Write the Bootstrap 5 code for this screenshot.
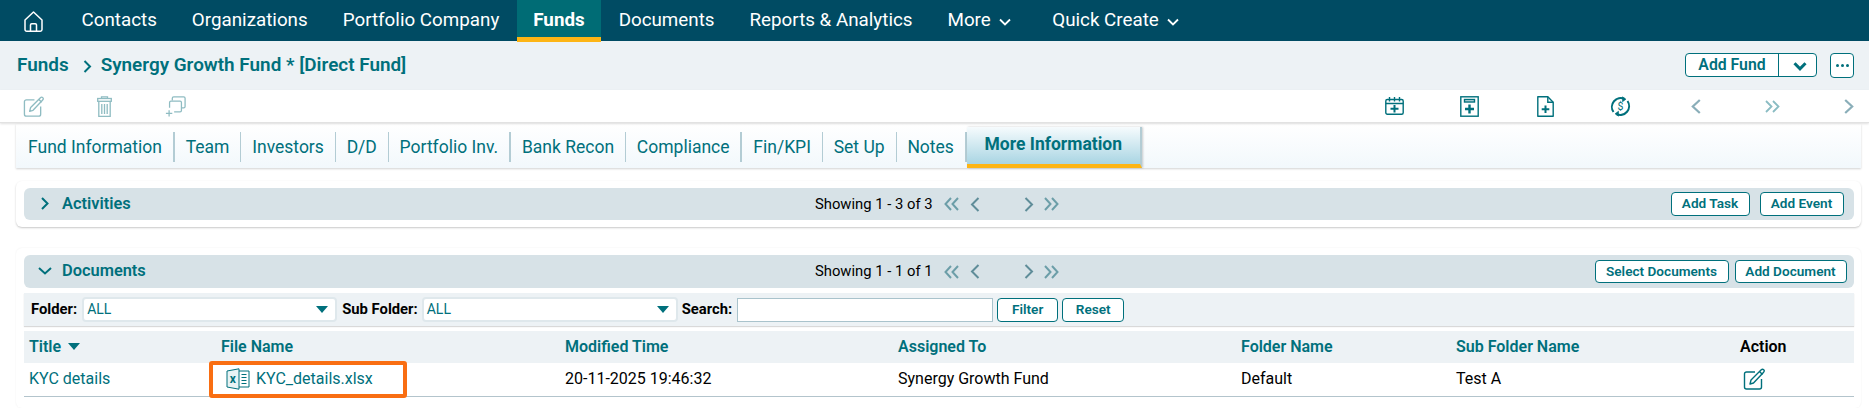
<!DOCTYPE html>
<html lang="en">
<head>
<meta charset="utf-8">
<title>Funds</title>
<link href="https://cdn.jsdelivr.net/npm/bootstrap@5.3.0/dist/css/bootstrap.min.css" rel="stylesheet">
<style>
:root{--teal:#00707c;--navy:#004b63;}
html,body{height:408px;overflow:hidden;}
body{font-family:Roboto,"Liberation Sans",sans-serif;font-size:16px;color:#000;background:#fff;}
a{text-decoration:none;color:inherit;}
.topbar{height:41px;background:var(--navy);color:#fff;font-size:18.8px;padding-left:24px;}
.topbar .home{width:19px;margin-right:21px;line-height:0;margin-top:1px;}
.topitem{height:42px;padding:0 17.5px 1px;display:flex;align-items:center;margin-bottom:-1px;position:relative;z-index:2;white-space:nowrap;}
.topitem.on{background:#006c75;border-bottom:5px solid #fdb515;font-weight:700;padding:4px 16.5px 0;}
.topitem svg{margin-left:8px;margin-top:3px;}
.topitem.more{padding-right:24px;}
.crumbbar{height:49px;background:#edf2f5;padding:0 15px 1px 17px;color:var(--teal);font-weight:600;font-size:18.9px;}
.crumbbar svg{margin:3px 9px 0 14px;}
.btnline{border:1px solid var(--teal);border-radius:4px;background:#fff;color:var(--teal);font-weight:600;font-size:13.6px;line-height:1;display:inline-flex;align-items:center;justify-content:center;padding:0;}
.addfund{height:24px;width:132px;}
.addfund .lbl{width:95px;height:100%;display:flex;align-items:center;justify-content:center;border-right:1px solid var(--teal);font-size:15.8px;}
.addfund .car{flex:1;height:100%;display:flex;align-items:center;justify-content:center;}
.dotsbtn{width:24px;height:25px;margin-left:13px;gap:2px;}
.dotsbtn i{width:3px;height:3px;border-radius:50%;background:var(--teal);display:block;}
.toolbar{height:33px;background:#fff;border-bottom:1px solid #e2e2e2;box-shadow:0 1px 2px rgba(0,0,0,.12);position:relative;}
.toolleft{padding-left:23px;gap:53px;}
.toolright{padding-right:15px;}
.toolright svg{display:block;}
.gap56{margin-right:56px}.gap58{margin-right:58px}.gap60{margin-right:60px}.gap64{margin-right:64px}
.tabsrow{margin:1px 8px 0 16px;height:44px;background:linear-gradient(#fff 0%,#f2f8fc 100%);box-shadow:0 1px 2px rgba(0,0,0,.18);color:var(--teal);font-size:17.5px;}
.tabitem{height:30px;margin-top:8px;display:flex;align-items:center;padding:0 10.9px;border-right:1px solid #b3ccd4;white-space:nowrap;}
.tabitem:first-child{padding-left:12px;}
.tabitem.heavy{border-right-width:2px;}
.tabon{height:41px;margin-top:3px;width:175px;justify-content:center;padding:0 0 2px;font-weight:700;font-size:17.5px;display:flex;align-items:center;background:linear-gradient(#f6fbfd 0%,#a9d5e3 100%);border-bottom:4px solid #fdb515;border-right:2px solid #b3ccd4;box-shadow:1px 0 2px rgba(0,0,0,.2);white-space:nowrap;}
.panelbox{margin:0 8px 0 16px;padding:7px 7px 0 8px;border-radius:6px;background:#fff;}
.panel-act{margin-top:13px;height:46px;box-shadow:0 1px 2px rgba(0,0,0,.22);}
.panel-doc{margin-top:21px;height:160px;box-shadow:0 0 2px rgba(0,0,0,.07);}
.sechead{background:#d7e2e7;height:32px;border-radius:6px;color:var(--teal);font-weight:600;font-size:16.4px;padding:0 10.5px 0 17px;}
.panel-doc .sechead{height:33px;padding-right:7.5px;}
.headname{width:774px;display:flex;align-items:center;white-space:nowrap;}
.headname .arrow-r{margin-right:13px;}
.headname .arrow-d{margin-left:-3px;margin-right:10px;}
.pager{color:#000;font-weight:400;font-size:14.8px;display:flex;align-items:center;}
.pager svg{display:block;}
.pager .lab{width:129px;white-space:nowrap;}
.pg2{margin-left:11px}.pg3{margin-left:44px}.pg4{margin-left:10px}
.minibtn{height:24px;}
.panel-doc .minibtn{height:23px;}
.w80{width:79px}.w84{width:84px;margin-left:10px}.w135{width:134px}.w113{width:112px;margin-left:6px}
.filterrow{height:33px;margin-top:5px;background:#edf2f5;box-shadow:0 1px 1px rgba(0,0,0,.15);font-size:14.8px;font-weight:700;padding:0 0 0 7px;white-space:nowrap;}
.pick{height:25px;width:255px;border:2px solid #dfe8ec;border-radius:4px;background:#fff;margin:0 5px;color:var(--teal);font-size:14px;font-weight:400;padding:0 7px 0 3px;}
.pick2{width:256px;margin:0 4px;}
.pick i{width:0;height:0;border-left:6.5px solid transparent;border-right:6.5px solid transparent;border-top:7px solid var(--teal);display:block;}
.searchin{height:24px;width:256px;border:1px solid #a9c3cc;background:#fff;margin:0 4px 0 5px;}
.filterbtn{height:24px;width:61px;font-size:13.6px;margin-right:4px;}
.filterbtn.wider{width:62px;}
.doctable{width:100%;margin-top:5px;table-layout:fixed;border-collapse:collapse;}
.doctable th{height:32px;padding:0 0 0 5px;background:#edf2f5;color:var(--teal);font-size:16px;font-weight:600;white-space:nowrap;}
.doctable th.blk{color:#000;}
.doctable td{height:33px;padding:0 0 0 5px;border-bottom:1px solid #b3c4cc;font-size:16px;white-space:nowrap;vertical-align:middle;}
.doctable .lnk{color:var(--teal);}
.doctable td.actcell{padding-left:8px;line-height:0;}
.sortcar{display:inline-block;width:0;height:0;border-left:6px solid transparent;border-right:6px solid transparent;border-top:7px solid var(--teal);margin-left:7px;vertical-align:2px;}
.w1{width:192px}.w2{width:344px}.w3{width:333px}.w4{width:343px}.w5{width:215px}.w6{width:284px}.w7{width:auto}
.filecell{position:relative;}
.filecell svg{margin:0 6px 0 5px;vertical-align:-6px;}
.callout{position:absolute;left:-7px;top:-2px;width:198px;height:37px;border:4px solid #f96e12;border-radius:3px;pointer-events:none;}
</style>
</head>
<body>
<nav class="topbar d-flex align-items-center">
  <a class="home d-block" href="#" aria-label="Home"><svg width="19" height="21" viewBox="0 0 19 21" fill="none" stroke="#fff" stroke-width="1.5" stroke-linejoin="round"><path d="M1 9 9.500 1 18 9v9.500a1.700 1.700 0 0 1-1.700 1.700H2.700A1.700 1.700 0 0 1 1 18.500z"/><path d="M6.500 20v-6a1.200 1.200 0 0 1 1.200-1.200h3.600a1.200 1.200 0 0 1 1.200 1.200v6"/></svg></a>
  <a class="topitem" href="#">Contacts</a>
  <a class="topitem" href="#">Organizations</a>
  <a class="topitem" href="#">Portfolio Company</a>
  <a class="topitem on" href="#">Funds</a>
  <a class="topitem" href="#">Documents</a>
  <a class="topitem" href="#">Reports &amp; Analytics</a>
  <a class="topitem more" href="#">More<svg width="12" height="8" viewBox="0 0 12 8" fill="none" stroke="#fff" stroke-width="1.800"><path d="M1 1.500 6 6.500l5-5"/></svg></a>
  <a class="topitem" href="#">Quick Create<svg width="12" height="8" viewBox="0 0 12 8" fill="none" stroke="#fff" stroke-width="1.800"><path d="M1 1.500 6 6.500l5-5"/></svg></a>
</nav>
<div class="crumbbar d-flex align-items-center">
  <a href="#">Funds</a>
  <svg width="9" height="13" viewBox="0 0 9 13" fill="none" stroke="#00707c" stroke-width="2"><path d="M1.500 1 7 6.500 1.500 12"/></svg>
  <span>Synergy Growth Fund * [Direct Fund]</span>
  <div class="ms-auto d-flex align-items-center">
    <div class="btnline addfund"><span class="lbl">Add Fund</span><span class="car"><svg width="14" height="9" viewBox="0 0 14 9" fill="none" stroke="#00707c" stroke-width="3"><path d="M1.500 1.200 7 6.800l5.500-5.600"/></svg></span></div>
    <button class="btnline dotsbtn" type="button" aria-label="More"><i></i><i></i><i></i></button>
  </div>
</div>
<div class="toolbar d-flex justify-content-between align-items-center">
  <div class="toolleft d-flex align-items-center">
    <svg width="21" height="21" viewBox="0 0 22 22" fill="none" stroke="#8fbcc2" stroke-width="1.400" stroke-linejoin="round"><path d="M12 4H3.500a2 2 0 0 0-2 2v13a2 2 0 0 0 2 2h13a2 2 0 0 0 2-2v-8"/><path d="M7 16l1-4L18 2c1-1 2-1 2.700-.3s.7 1.700-.3 2.700L10.500 15z"/><path d="M16.500 3.500l3 3"/></svg>
    <svg width="15" height="21" viewBox="0 0 15 21" fill="none" stroke="#8fbcc2" stroke-width="1.300"><path d="M4.500 2.500V.8h6v1.700"/><rect x=".7" y="2.500" width="13.600" height="2.800"/><path d="M1.800 5.300v15h11.400v-15M4.800 8v10M7.500 8v10M10.200 8v10"/></svg>
    <svg width="21" height="21" viewBox="0 0 23 23" fill="none" stroke="#8fbcc2" stroke-width="1.400"><path d="M8 5V2.500A1.500 1.500 0 0 1 9.500 1h11A1.500 1.500 0 0 1 22 2.500v9a1.500 1.500 0 0 1-1.500 1.500H18"/><path d="M5 13V7a1.500 1.500 0 0 1 1.500-1.500h10A1.500 1.500 0 0 1 18 7v9a1.500 1.500 0 0 1-1.500 1.500H10"/><path d="M4.500 15.500v7M1 19h7"/></svg>
  </div>
  <div class="toolright d-flex align-items-center">
    <svg class="gap56" width="19" height="18" viewBox="0 0 19 18" fill="none" stroke="#00707c" stroke-width="1.400"><rect x=".8" y="2.500" width="17.400" height="14.700" rx="1.500"/><path d="M.8 6.500h17.400M4.500 0v4.500M9.500 0v4.500M14.500 0v4.500"/><path d="M9.500 8v7.500M5.500 11.700h8" stroke-width="2"/></svg>
    <svg class="gap58" width="19" height="21" viewBox="0 0 19 21" fill="none" stroke="#00707c" stroke-width="1.400"><rect x=".8" y=".8" width="17.400" height="19.400"/><rect x="4.500" y="3.500" width="10" height="2.500" fill="#00707c" fill-opacity=".2"/><path d="M9.500 8.500v9M5 13h9" stroke-width="2.400"/></svg>
    <svg class="gap56" width="17" height="21" viewBox="0 0 17 21" fill="none" stroke="#00707c" stroke-width="1.400"><path d="M.8.800h10l5.400 5.400v14H.8z" stroke-linejoin="round"/><path d="M10.800.8v5.400h5.400"/><path d="M8.500 9.500v7.500M4.700 13.200h7.600" stroke-width="2"/></svg>
    <svg class="gap60" width="21" height="21" viewBox="0 0 21 21" fill="none" stroke="#00707c" stroke-width="2"><path d="M14.500 3A8.800 8.800 0 0 0 3.500 16"/><path d="M6.500 18A8.800 8.800 0 0 0 17.500 5"/><path d="M12.500.8l3.500 2.400-3.500 2.600zM8.500 15.200L5 17.800l3.500 2.400z" fill="#00707c" stroke-width=".6"/><text x="10.500" y="14" font-size="10.500" text-anchor="middle" fill="#00707c" stroke="none" font-family="Roboto">$</text></svg>
    <svg class="gap64" width="10" height="15" viewBox="0 0 10 15" fill="none" stroke="#8aaeb9" stroke-width="2.200"><path d="M8.800 1 1.800 7.500l7 6.500"/></svg>
    <svg class="gap64" width="15" height="13" viewBox="0 0 15 13" fill="none" stroke="#8abcc3" stroke-width="1.800"><path d="M1 1l5.500 5.500L1 12M8 1l5.500 5.500L8 12"/></svg>
    <svg width="10" height="15" viewBox="0 0 10 15" fill="none" stroke="#8aaeb9" stroke-width="2.200"><path d="M1.200 1l7 6.500-7 6.500"/></svg>
  </div>
</div>
<div class="tabsrow d-flex align-items-start">
  <a class="tabitem heavy" href="#">Fund Information</a>
  <a class="tabitem" href="#">Team</a>
  <a class="tabitem" href="#">Investors</a>
  <a class="tabitem" href="#">D/D</a>
  <a class="tabitem heavy" href="#">Portfolio Inv.</a>
  <a class="tabitem" href="#">Bank Recon</a>
  <a class="tabitem heavy" href="#">Compliance</a>
  <a class="tabitem" href="#">Fin/KPI</a>
  <a class="tabitem" href="#">Set Up</a>
  <a class="tabitem heavy" href="#">Notes</a>
  <a class="tabon" href="#">More Information</a>
</div>
<section class="panelbox panel-act">
  <div class="sechead d-flex align-items-center">
    <div class="headname"><svg class="arrow-r" width="8" height="13" viewBox="0 0 8 13" fill="none" stroke="#00707c" stroke-width="2"><path d="M1 1l5.500 5.500L1 12"/></svg><span>Activities</span></div>
    <div class="pager"><span class="lab">Showing 1 - 3 of 3</span>
      <svg width="15" height="14" viewBox="0 0 15 14" fill="none" stroke="#6c9ea8" stroke-width="2"><path d="M7 1 1.500 7 7 13M14 1 8.500 7l5.500 6"/></svg>
      <svg class="pg2" width="10" height="15" viewBox="0 0 10 15" fill="none" stroke="#5f8d99" stroke-width="2"><path d="M8.500 1 2 7.500 8.500 14"/></svg>
      <svg class="pg3" width="10" height="15" viewBox="0 0 10 15" fill="none" stroke="#5f8d99" stroke-width="2"><path d="M1.500 1 8 7.500 1.500 14"/></svg>
      <svg class="pg4" width="15" height="14" viewBox="0 0 15 14" fill="none" stroke="#6c9ea8" stroke-width="2"><path d="M1 1l5.500 6L1 13M8 1l5.500 6L8 13"/></svg>
    </div>
    <div class="ms-auto d-flex">
      <button class="btnline minibtn w80" type="button">Add Task</button>
      <button class="btnline minibtn w84" type="button">Add Event</button>
    </div>
  </div>
</section>
<section class="panelbox panel-doc">
  <div class="sechead d-flex align-items-center">
    <div class="headname"><svg class="arrow-d" width="14" height="8" viewBox="0 0 14 8" fill="none" stroke="#00707c" stroke-width="2"><path d="M1 1l6 5.500L13 1"/></svg><span>Documents</span></div>
    <div class="pager"><span class="lab">Showing 1 - 1 of 1</span>
      <svg width="15" height="14" viewBox="0 0 15 14" fill="none" stroke="#6c9ea8" stroke-width="2"><path d="M7 1 1.500 7 7 13M14 1 8.500 7l5.500 6"/></svg>
      <svg class="pg2" width="10" height="15" viewBox="0 0 10 15" fill="none" stroke="#5f8d99" stroke-width="2"><path d="M8.500 1 2 7.500 8.500 14"/></svg>
      <svg class="pg3" width="10" height="15" viewBox="0 0 10 15" fill="none" stroke="#5f8d99" stroke-width="2"><path d="M1.500 1 8 7.500 1.500 14"/></svg>
      <svg class="pg4" width="15" height="14" viewBox="0 0 15 14" fill="none" stroke="#6c9ea8" stroke-width="2"><path d="M1 1l5.500 6L1 13M8 1l5.500 6L8 13"/></svg>
    </div>
    <div class="ms-auto d-flex">
      <button class="btnline minibtn w135" type="button">Select Documents</button>
      <button class="btnline minibtn w113" type="button">Add Document</button>
    </div>
  </div>
  <div class="filterrow d-flex align-items-center">
    <span>Folder:</span>
    <div class="pick d-flex align-items-center justify-content-between"><span>ALL</span><i></i></div>
    <span>Sub Folder:</span>
    <div class="pick pick2 d-flex align-items-center justify-content-between"><span>ALL</span><i></i></div>
    <span>Search:</span>
    <div class="searchin"></div>
    <button class="btnline filterbtn" type="button">Filter</button>
    <button class="btnline filterbtn wider" type="button">Reset</button>
  </div>
  <table class="doctable">
    <colgroup><col class="w1"><col class="w2"><col class="w3"><col class="w4"><col class="w5"><col class="w6"><col class="w7"></colgroup>
    <thead><tr><th>Title<span class="sortcar"></span></th><th>File Name</th><th>Modified Time</th><th>Assigned To</th><th>Folder Name</th><th>Sub Folder Name</th><th class="blk">Action</th></tr></thead>
    <tbody><tr>
      <td class="lnk">KYC details</td>
      <td class="lnk filecell"><svg width="24" height="22" viewBox="0 0 24 22" fill="none" stroke="#00707c" stroke-width="1"><path d="M1 3 13 .8v20.400L1 19z" fill="#e8f3f5"/><path d="M13 3h10v16H13M15.500 6.500h5M15.500 9.500h5M15.500 12.500h5M15.500 15.500h5"/><text x="6.800" y="15" font-size="12" font-weight="700" text-anchor="middle" fill="#00707c" stroke="none" font-family="Roboto">x</text></svg>KYC_details.xlsx<span class="callout"></span></td>
      <td>20-11-2025 19:46:32</td>
      <td>Synergy Growth Fund</td>
      <td>Default</td>
      <td>Test A</td>
      <td class="actcell"><svg width="22" height="22" viewBox="0 0 22 22" fill="none" stroke="#00707c" stroke-width="1.400" stroke-linejoin="round"><path d="M12 4H3.500a2 2 0 0 0-2 2v13a2 2 0 0 0 2 2h13a2 2 0 0 0 2-2v-8"/><path d="M7 16l1-4L18 2c1-1 2-1 2.700-.3s.7 1.700-.3 2.700L10.500 15z"/><path d="M16.500 3.500l3 3"/></svg></td>
    </tr></tbody>
  </table>
</section>
</body>
</html>
